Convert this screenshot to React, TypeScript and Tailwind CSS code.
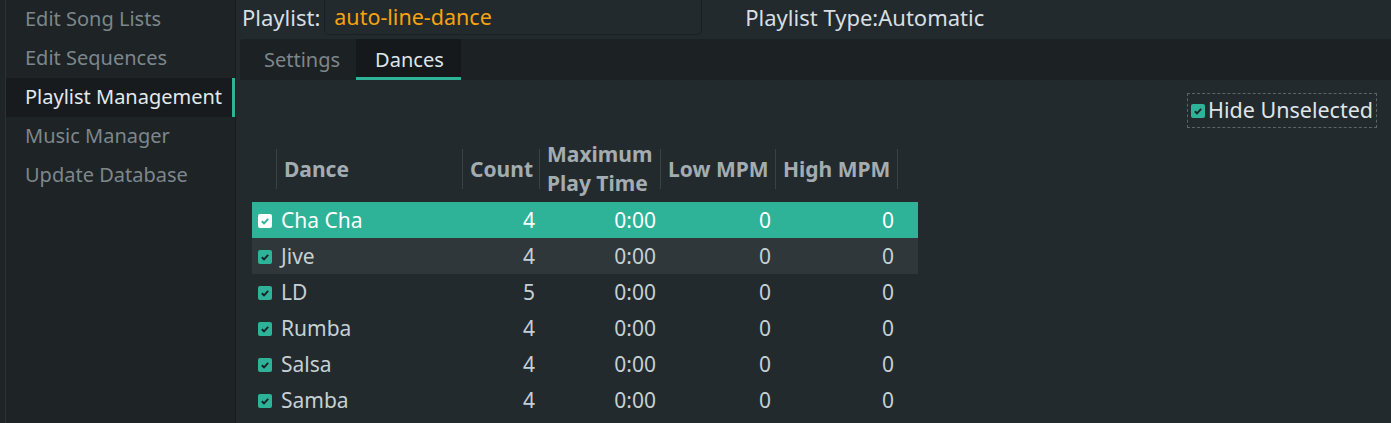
import type { ReactNode } from 'react';

interface DanceRow {
    name: string;
    count: number;
    maxTime: string;
    low: number;
    high: number;
}

const NAV = ['Edit Song Lists', 'Edit Sequences', 'Playlist Management', 'Music Manager', 'Update Database'];

const ROWS: DanceRow[] = [
    { name: 'Cha Cha', count: 4, maxTime: '0:00', low: 0, high: 0 },
    { name: 'Jive', count: 4, maxTime: '0:00', low: 0, high: 0 },
    { name: 'LD', count: 5, maxTime: '0:00', low: 0, high: 0 },
    { name: 'Rumba', count: 4, maxTime: '0:00', low: 0, high: 0 },
    { name: 'Salsa', count: 4, maxTime: '0:00', low: 0, high: 0 },
    { name: 'Samba', count: 4, maxTime: '0:00', low: 0, high: 0 },
];

function Check({ light = false }: { light?: boolean }) {
    return (
        <svg width="14" height="14" viewBox="0 0 14 14" className="shrink-0">
            <rect x="0" y="0" width="14" height="14" rx="2" fill={light ? '#ffffff' : '#2eb398'} />
            <path d="M3.8 7.2 L6 9.3 L10.2 4.8" fill="none" stroke={light ? '#2eb398' : '#1b2226'} strokeWidth="1.9" />
        </svg>
    );
}

function HeadCell({ children, className }: { children: ReactNode; className: string }) {
    return (
        <div className={`flex h-[40px] items-center border-l border-[#3a4246] pl-[7px] leading-[29px] ${className}`}>
            {children}
        </div>
    );
}

export default function App() {
    return (
        <div className="flex h-[423px] w-[1391px] overflow-hidden bg-[#232a2e] font-['Noto_Sans',sans-serif] text-[20px]">
            {/* left strip + nav */}
            <div className="w-[6px] border-r border-[#2b3236] bg-[#1f2427]" />
            <nav className="flex w-[230px] flex-col border-r border-[#181c1f] bg-[#1e2326]">
                {NAV.map((item) => {
                    const active = item === 'Playlist Management';
                    return (
                        <div
                            key={item}
                            className={`flex h-[39px] items-center pb-[2px] pl-[19px] ${
                                active ? 'border-r-[3px] border-[#2eb398] bg-[#181b1d] text-[#e3e9ec]' : 'text-[#7d878b]'
                            }`}
                        >
                            {item}
                        </div>
                    );
                })}
            </nav>

            {/* main */}
            <div className="flex flex-1 flex-col pl-[4px]">
                <div className="flex h-[39px] items-start text-[22px]">
                    <div className="flex h-[34px] items-center pl-[2px] text-[#d7dfe3]">Playlist:</div>
                    <div className="ml-[4px] flex h-[35px] w-[378px] items-center rounded-b-[5px] border border-t-0 border-[#1a1f22] pl-[9px] text-[21.5px] text-[#f5a30e]">
                        auto-line-dance
                    </div>
                    <div className="ml-[43px] flex h-[34px] items-center text-[#d7dfe3]">Playlist Type:Automatic</div>
                </div>

                {/* tab bar */}
                <div className="flex h-[41px] items-stretch rounded-tl-[3px] bg-[#1c2124] pl-[5px]">
                    <div className="flex items-center pl-[19px] pr-[16px] text-[#7d878b]">Settings</div>
                    <div className="flex items-center border-b-[3px] border-[#2eb398] bg-[#16191b] pl-[19px] pr-[17px] pt-[3px] text-[#dfe5e8]">
                        Dances
                    </div>
                </div>

                <div className="flex flex-1 flex-col">
                    <div className="flex justify-end pt-[13px] pr-[14px]">
                        <div className="flex h-[35px] items-center gap-[3px] border border-dashed border-[#5b6469] pl-[3px] pr-[3px] text-[21.5px] text-[#dfe5e8]">
                            <Check />
                            <span>Hide Unselected</span>
                        </div>
                    </div>

                    {/* table */}
                    <div className="ml-[12px] mt-[18px] w-[666px]">
                        <div className="flex h-[45px] items-center pt-[1px] text-[21px] font-bold text-[#a3adb1]">
                            <div className="w-[24px]" />
                            <HeadCell className="w-[186px]">Dance</HeadCell>
                            <HeadCell className="w-[77px]">Count</HeadCell>
                            <HeadCell className="w-[121px] flex-col !items-start justify-center">
                                <span>Maximum</span>
                                <span>Play Time</span>
                            </HeadCell>
                            <HeadCell className="w-[115px]">Low MPM</HeadCell>
                            <HeadCell className="w-[123px] border-r">High MPM</HeadCell>
                        </div>
                        <div className="mt-[11px] flex flex-col text-[21px]">
                            {ROWS.map((r, i) => (
                                <div
                                    key={r.name}
                                    className={`flex h-[36px] items-center pt-[2px] ${
                                        i === 0 ? 'bg-[#2eb398] text-white' : i === 1 ? 'bg-[#2f373b] text-[#c6d0d4]' : 'text-[#c6d0d4]'
                                    }`}
                                >
                                    <div className="flex w-[24px] justify-center pl-[2px]">
                                        <Check light={i === 0} />
                                    </div>
                                    <div className="w-[186px] pl-[5px]">{r.name}</div>
                                    <div className="w-[77px] pr-[4px] text-right">{r.count}</div>
                                    <div className="w-[121px] pr-[4px] text-right">{r.maxTime}</div>
                                    <div className="w-[115px] pr-[4px] text-right">{r.low}</div>
                                    <div className="w-[123px] pr-[4px] text-right">{r.high}</div>
                                </div>
                            ))}
                        </div>
                    </div>
                </div>
            </div>
        </div>
    );
}
